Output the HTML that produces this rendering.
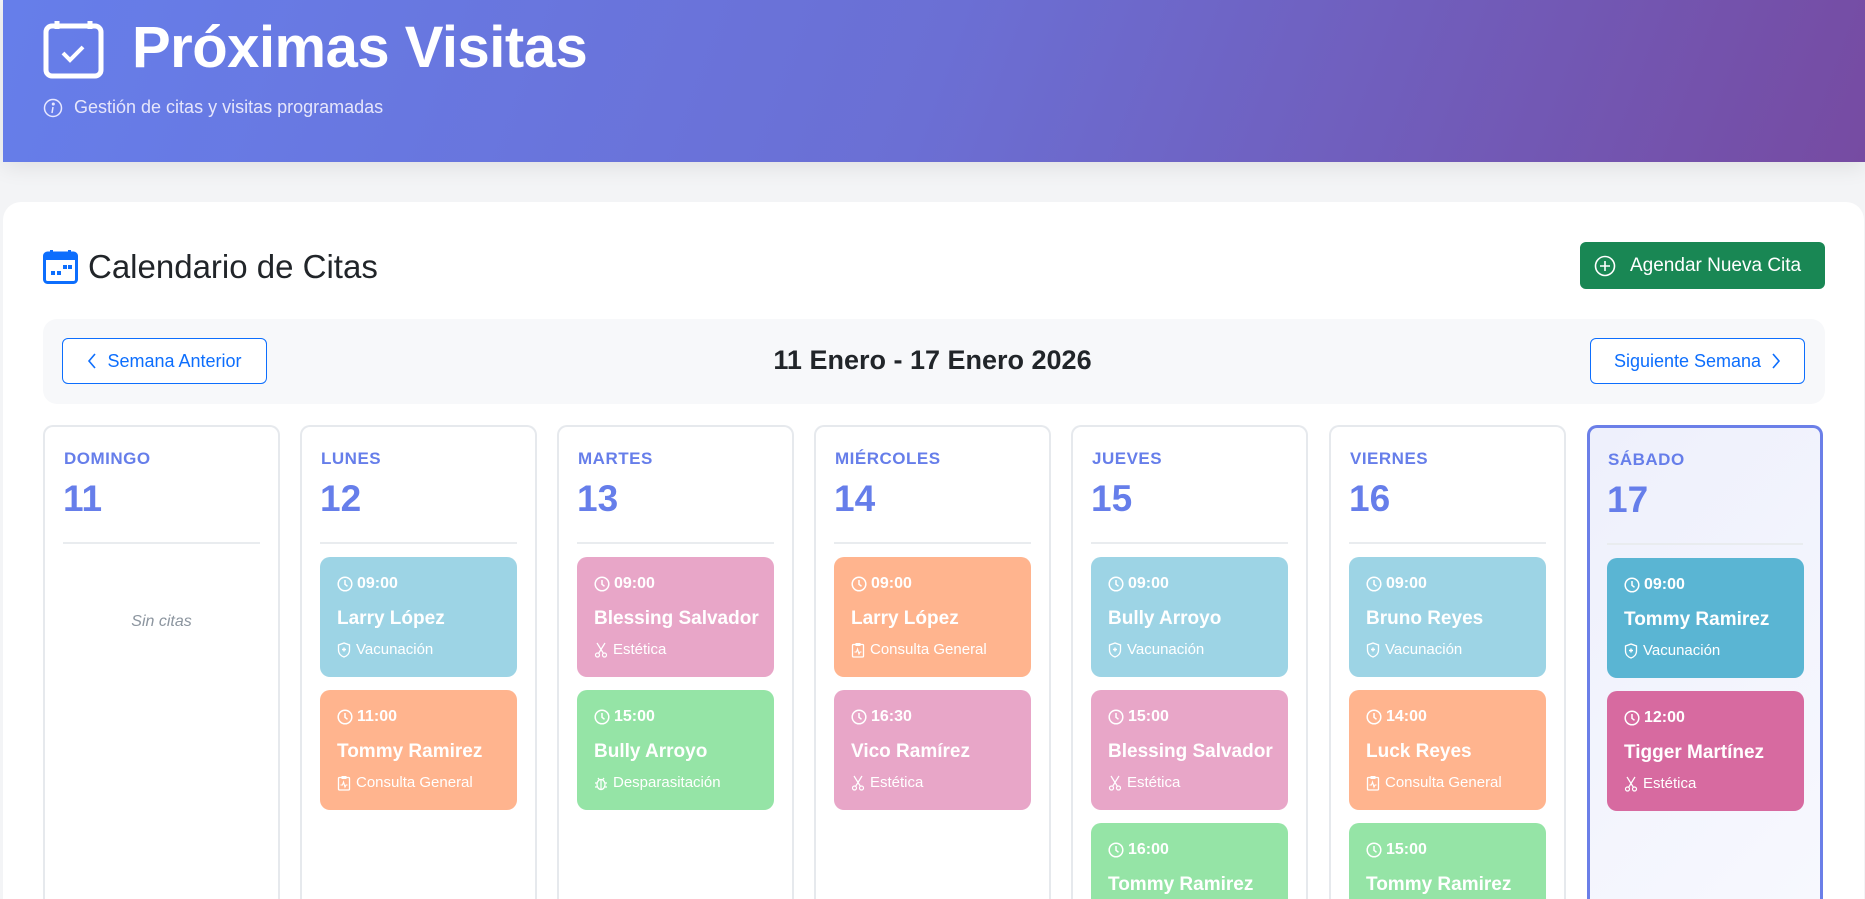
<!DOCTYPE html>
<html style="width:1865px;height:899px;overflow:hidden"><head><meta charset="utf-8"><style>
*{box-sizing:border-box;margin:0;padding:0}
body{width:1865px;height:899px;overflow:hidden;background:#f3f4f6;font-family:"Liberation Sans",sans-serif;position:relative}
.hdr{position:absolute;left:3px;top:0;width:1862px;height:162px;background:linear-gradient(110deg,#667eea 0%,#6b6fd4 50%,#764ba2 100%);box-shadow:0 6px 20px rgba(0,0,0,.08)}
.ab{position:absolute}
.main{position:absolute;left:3px;top:202px;width:1861px;height:697px;background:#fff;border-radius:18px 18px 0 0}
.btn{position:absolute;border:1.5px solid #0d6efd;border-radius:6px;color:#0d6efd;font-size:18px;display:flex;align-items:center;justify-content:center;gap:10px;background:#fff}
.col{position:absolute;top:425px;width:237px;height:474px;border:2px solid #e6e9ed;border-bottom:none;border-radius:10px 10px 0 0;background:#fff;overflow:hidden}
.dn{position:absolute;left:19px;top:22px;font-size:17px;font-weight:bold;color:#667eea;letter-spacing:.5px}
.num{position:absolute;left:18px;top:51px;font-size:37px;font-weight:bold;color:#667eea}
.hr{position:absolute;left:18px;right:18px;top:115px;height:2px;background:#e9ecef}
.card{position:absolute;left:18px;width:197px;height:120px;border-radius:10px;color:#fff}
.t{position:absolute;left:17px;top:18px;font-size:16px;font-weight:bold;display:flex;align-items:center;gap:4px}
.n{position:absolute;left:17px;top:51px;font-size:19px;font-weight:bold;white-space:nowrap}
.ty{position:absolute;left:17px;top:84px;font-size:15px;display:flex;align-items:center;gap:5px;white-space:nowrap}
.b{background:#9dd4e5}.o{background:#ffb48e}.p{background:#e8a6c8}.g{background:#95e4a6}
</style></head><body>
<div class="hdr">
<svg class="ab" style="left:40px;top:19px" width="61" height="60" viewBox="0 0 61 60" fill="none" stroke="#fff" stroke-width="5"><rect x="3" y="7" width="55" height="50" rx="6"/><line x1="14" y1="2" x2="14" y2="10"/><line x1="47" y1="2" x2="47" y2="10"/><path d="M20 34l7 7 13-13" stroke-width="4"/></svg>
<div class="ab" style="left:129px;top:14px;font-size:58px;font-weight:bold;color:#fff;letter-spacing:-0.5px">Próximas Visitas</div>
<svg class="ab" style="left:40px;top:98px" width="20" height="20" viewBox="0 0 20 20" fill="none" stroke="#e8e8ff" stroke-width="1.5"><circle cx="10" cy="10" r="8.5"/><line x1="10" y1="9" x2="9" y2="15"/><circle cx="10.3" cy="6" r=".8" fill="#e8e8ff"/></svg>
<div class="ab" style="left:71px;top:97px;font-size:18px;color:#e6e6fb">Gestión de citas y visitas programadas</div>
</div>
<div class="main"></div>
<svg class="ab" style="left:43px;top:249px" width="35" height="35" viewBox="0 0 35 35"><rect x="1.5" y="4" width="32" height="29.5" rx="3" fill="none" stroke="#0d6efd" stroke-width="3"/><rect x="1.5" y="4" width="32" height="7" fill="#0d6efd"/><rect x="7" y="1" width="3" height="6" fill="#0d6efd"/><rect x="25" y="1" width="3" height="6" fill="#0d6efd"/><rect x="8" y="22" width="4" height="4" fill="#0d6efd"/><rect x="14" y="22" width="4" height="4" fill="#0d6efd"/><rect x="20" y="16" width="4" height="4" fill="#0d6efd"/><rect x="25" y="16" width="4" height="4" fill="#0d6efd"/></svg>
<div class="ab" style="left:88px;top:248px;font-size:33px;color:#212529">Calendario de Citas</div>
<div class="ab" style="left:1580px;top:242px;width:245px;height:47px;background:#198754;border-radius:6px;color:#fff;font-size:19px;display:flex;align-items:center;padding-left:14px;gap:14px"><svg width="22" height="22" viewBox="0 0 22 22" fill="none" stroke="#fff" stroke-width="1.6"><circle cx="11" cy="11" r="9.5"/><path d="M11 6v10M6 11h10"/></svg>Agendar Nueva Cita</div>
<div class="ab" style="left:43px;top:319px;width:1782px;height:85px;background:#f7f8fa;border-radius:14px"></div>
<div class="btn" style="left:62px;top:338px;width:205px;height:46px"><svg width="10" height="16" viewBox="0 0 10 16" fill="none" stroke="#0d6efd" stroke-width="1.6"><path d="M8 1L2 8l6 7"/></svg>Semana Anterior</div>
<div class="ab" style="left:0;width:1865px;top:345px;text-align:center;font-size:27px;font-weight:bold;color:#212529">11 Enero - 17 Enero 2026</div>
<div class="btn" style="left:1590px;top:338px;width:215px;height:46px">Siguiente Semana<svg width="10" height="16" viewBox="0 0 10 16" fill="none" stroke="#0d6efd" stroke-width="1.6"><path d="M2 1l6 7-6 7"/></svg></div>

<svg width="0" height="0" style="position:absolute"><defs>
<symbol id="clk" viewBox="0 0 16 16"><circle cx="8" cy="8" r="6.8" fill="none" stroke="#fff" stroke-width="1.5"/><path d="M8 4v4.3l2.5 2" fill="none" stroke="#fff" stroke-width="1.5"/></symbol>
<symbol id="shd" viewBox="0 0 14 16"><path d="M7 1L1.5 3v5c0 3.5 2.5 6 5.5 7 3-1 5.5-3.5 5.5-7V3z" fill="none" stroke="#fff" stroke-width="1.3"/><path d="M7 5.5v4M5 7.5h4" stroke="#fff" stroke-width="1.4"/></symbol>
<symbol id="sci" viewBox="0 0 14 16"><circle cx="3.5" cy="13" r="2" fill="none" stroke="#fff" stroke-width="1.2"/><circle cx="10.5" cy="13" r="2" fill="none" stroke="#fff" stroke-width="1.2"/><path d="M4.5 11.5L11 1M9.5 11.5L3 1" stroke="#fff" stroke-width="1.2"/></symbol>
<symbol id="clp" viewBox="0 0 14 16"><rect x="1.5" y="2.5" width="11" height="12.5" rx="1" fill="none" stroke="#fff" stroke-width="1.3"/><rect x="4.5" y="1" width="5" height="3" fill="#fff"/><path d="M3.5 10h2l1-3 1.5 5 1-2h1.5" fill="none" stroke="#fff" stroke-width="1.1"/></symbol>
<symbol id="bug" viewBox="0 0 14 16"><ellipse cx="7" cy="9.5" rx="4" ry="5" fill="none" stroke="#fff" stroke-width="1.3"/><path d="M4 3l1.5 2M10 3l-1.5 2M1 8h2M11 8h2M1 12h2M11 12h2M7 5v9" stroke="#fff" stroke-width="1.2"/></symbol>
</defs></svg>

<div class="col" style="left:43px"><div class="dn">DOMINGO</div><div class="num">11</div><div class="hr"></div>
<div class="ab" style="left:0;right:0;top:186px;text-align:center;font-style:italic;color:#8c959f;font-size:16px">Sin citas</div></div>

<div class="col" style="left:300px"><div class="dn">LUNES</div><div class="num">12</div><div class="hr"></div>
<div class="card b" style="top:130px"><div class="t"><svg width="16" height="16"><use href="#clk"/></svg>09:00</div><div class="n">Larry López</div><div class="ty"><svg width="14" height="16"><use href="#shd"/></svg>Vacunación</div></div>
<div class="card o" style="top:263px"><div class="t"><svg width="16" height="16"><use href="#clk"/></svg>11:00</div><div class="n">Tommy Ramirez</div><div class="ty"><svg width="14" height="16"><use href="#clp"/></svg>Consulta General</div></div></div>

<div class="col" style="left:557px"><div class="dn">MARTES</div><div class="num">13</div><div class="hr"></div>
<div class="card p" style="top:130px"><div class="t"><svg width="16" height="16"><use href="#clk"/></svg>09:00</div><div class="n">Blessing Salvador</div><div class="ty"><svg width="14" height="16"><use href="#sci"/></svg>Estética</div></div>
<div class="card g" style="top:263px"><div class="t"><svg width="16" height="16"><use href="#clk"/></svg>15:00</div><div class="n">Bully Arroyo</div><div class="ty"><svg width="14" height="16"><use href="#bug"/></svg>Desparasitación</div></div></div>

<div class="col" style="left:814px"><div class="dn">MIÉRCOLES</div><div class="num">14</div><div class="hr"></div>
<div class="card o" style="top:130px"><div class="t"><svg width="16" height="16"><use href="#clk"/></svg>09:00</div><div class="n">Larry López</div><div class="ty"><svg width="14" height="16"><use href="#clp"/></svg>Consulta General</div></div>
<div class="card p" style="top:263px"><div class="t"><svg width="16" height="16"><use href="#clk"/></svg>16:30</div><div class="n">Vico Ramírez</div><div class="ty"><svg width="14" height="16"><use href="#sci"/></svg>Estética</div></div></div>

<div class="col" style="left:1071px"><div class="dn">JUEVES</div><div class="num">15</div><div class="hr"></div>
<div class="card b" style="top:130px"><div class="t"><svg width="16" height="16"><use href="#clk"/></svg>09:00</div><div class="n">Bully Arroyo</div><div class="ty"><svg width="14" height="16"><use href="#shd"/></svg>Vacunación</div></div>
<div class="card p" style="top:263px"><div class="t"><svg width="16" height="16"><use href="#clk"/></svg>15:00</div><div class="n">Blessing Salvador</div><div class="ty"><svg width="14" height="16"><use href="#sci"/></svg>Estética</div></div>
<div class="card g" style="top:396px"><div class="t"><svg width="16" height="16"><use href="#clk"/></svg>16:00</div><div class="n">Tommy Ramirez</div></div></div>

<div class="col" style="left:1329px"><div class="dn">VIERNES</div><div class="num">16</div><div class="hr"></div>
<div class="card b" style="top:130px"><div class="t"><svg width="16" height="16"><use href="#clk"/></svg>09:00</div><div class="n">Bruno Reyes</div><div class="ty"><svg width="14" height="16"><use href="#shd"/></svg>Vacunación</div></div>
<div class="card o" style="top:263px"><div class="t"><svg width="16" height="16"><use href="#clk"/></svg>14:00</div><div class="n">Luck Reyes</div><div class="ty"><svg width="14" height="16"><use href="#clp"/></svg>Consulta General</div></div>
<div class="card g" style="top:396px"><div class="t"><svg width="16" height="16"><use href="#clk"/></svg>15:00</div><div class="n">Tommy Ramirez</div></div></div>

<div class="col" style="left:1587px;width:236px;border:3px solid #6b7fe8;border-bottom:none;background:linear-gradient(135deg,#eef0fc,#f7f8fe)"><div class="dn" style="left:18px;top:22px">SÁBADO</div><div class="num" style="left:17px">17</div><div class="hr" style="left:17px;right:17px"></div>
<div class="card" style="top:130px;left:17px;background:#5ab5d3"><div class="t"><svg width="16" height="16"><use href="#clk"/></svg>09:00</div><div class="n">Tommy Ramirez</div><div class="ty"><svg width="14" height="16"><use href="#shd"/></svg>Vacunación</div></div>
<div class="card" style="top:263px;left:17px;background:#d76aa0"><div class="t"><svg width="16" height="16"><use href="#clk"/></svg>12:00</div><div class="n">Tigger Martínez</div><div class="ty"><svg width="14" height="16"><use href="#sci"/></svg>Estética</div></div></div>
</body></html>
